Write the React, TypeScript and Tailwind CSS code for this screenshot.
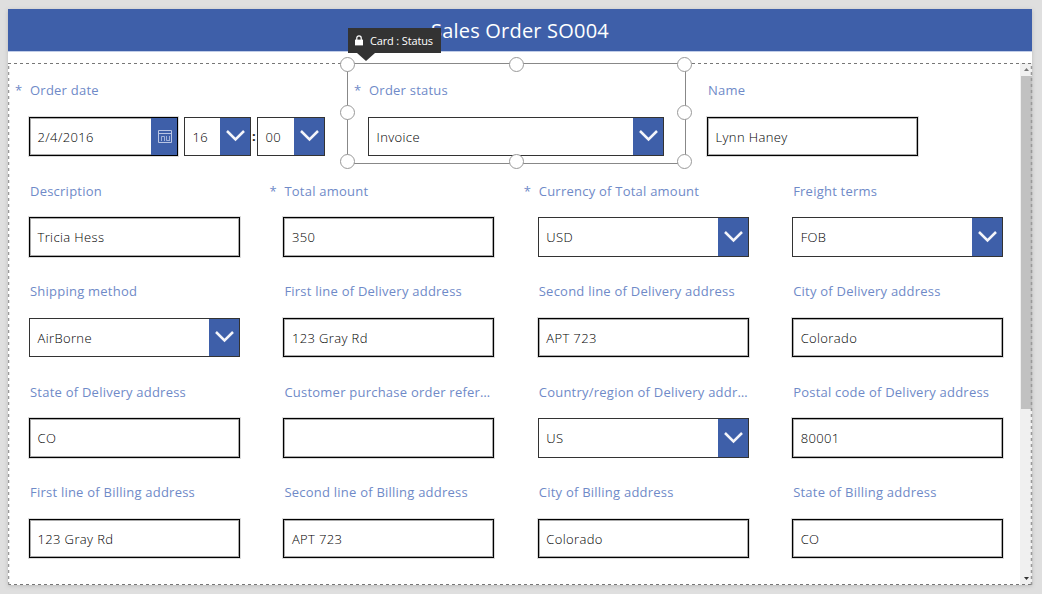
import type { ReactNode } from "react";

type Field = { label: string; value: string; required?: boolean; select?: boolean };

const rows: Field[][] = [
  [
    { label: "Description", value: "Tricia Hess" },
    { label: "Total amount", value: "350", required: true },
    { label: "Currency of Total amount", value: "USD", required: true, select: true },
    { label: "Freight terms", value: "FOB", select: true },
  ],
  [
    { label: "Shipping method", value: "AirBorne", select: true },
    { label: "First line of Delivery address", value: "123 Gray Rd" },
    { label: "Second line of Delivery address", value: "APT 723" },
    { label: "City of Delivery address", value: "Colorado" },
  ],
  [
    { label: "State of Delivery address", value: "CO" },
    { label: "Customer purchase order refer…", value: "" },
    { label: "Country/region of Delivery addr…", value: "US", select: true },
    { label: "Postal code of Delivery address", value: "80001" },
  ],
  [
    { label: "First line of Billing address", value: "123 Gray Rd" },
    { label: "Second line of Billing address", value: "APT 723" },
    { label: "City of Billing address", value: "Colorado" },
    { label: "State of Billing address", value: "CO" },
  ],
];

function Chevron() {
  return (
    <svg width="20" height="14" viewBox="0 0 20 14" fill="none" stroke="#f4f5fa" strokeWidth="2.5">
      <path d="M2 2 10.500 10.500l8.500-8.500" />
    </svg>
  );
}

function CalendarIcon() {
  return (
    <svg className="ml-px" width="14" height="13" viewBox="0 0 14 13" fill="none" stroke="#b9c5e4">
      <path d="M.5.5h13v12H.5zM.5 3.500h13" />
      <path d="M3.500 11V6.500h3V11M8.500 6v4.500h2.500M11.500 6v5" strokeOpacity=".8" />
    </svg>
  );
}

function Label({ children, required }: { children: ReactNode; required?: boolean }) {
  return (
    <div className="flex h-5 text-[13px] leading-5 tracking-[0.23px] text-[#6f8ac8]">
      <span className="w-[22px] shrink-0 pl-[7px]">{required ? "*" : ""}</span>
      <span className="w-[220px] whitespace-nowrap">{children}</span>
    </div>
  );
}

function Box({ value, select, className = "w-[211px]" }: { value: string; select?: boolean; className?: string }) {
  return (
    <div
      className={`flex h-[39.75px] shrink-0 justify-between border bg-white text-[13px] font-light tracking-[0.37px] text-black ${
        select ? "border-[#333]" : "border-black shadow-[0_0_0_1px_#dcdcdc,inset_0_0_0_1px_#aaa]"
      } ${className}`}
    >
      <span className="self-center pt-[2px] pl-[7.5px] whitespace-nowrap">{value}</span>
      {select && (
        <span className="flex w-[30px] items-center justify-center bg-[#3e5fa9]">
          <Chevron />
        </span>
      )}
    </div>
  );
}

function Card({ field, wide }: { field: Field; wide?: boolean }) {
  return (
    <div className="pt-[16.5px]">
      <Label required={field.required}>{field.label}</Label>
      <div className="pt-[16.5px] pl-[21px]">
        <Box value={field.value} select={field.select} className={wide ? "w-[296px]" : "w-[211px]"} />
      </div>
    </div>
  );
}

function Handle({ className }: { className: string }) {
  return <i className={`absolute size-[15px] rounded-full border-[1.5px] border-[#999] bg-white ${className}`} />;
}

export default function App() {
  return (
    <div className="h-[594px] w-[1042px] overflow-hidden bg-[#dfdfdf] pt-[9px] pl-2 font-['Open_Sans',sans-serif]">
      <main className="h-[576px] w-[1024px] bg-white shadow-[0_1px_4px_#bbb]">
        <header className="flex h-[42px] items-center justify-center bg-[#3e5fa9] pt-[2px] text-[20px] tracking-[0.2px] text-white shadow-[0_1px_0_#c1cde8]">
          <h1>Sales Order SO004</h1>
        </header>
        <section className="relative mt-3 flex h-[522px]">
          <div className="w-[1012px] overflow-hidden">
            <div className="grid h-[101px] w-[1017px] grid-cols-3 pt-[0.5px]">
              <div className="pt-[16.5px]">
                <Label required>Order date</Label>
                <div className="flex pt-[16.5px] pl-[21px]">
                  <div className="flex h-[39.75px] w-[149px] border border-black text-[13px] font-light tracking-[0.37px] text-black shadow-[0_0_0_1px_#dcdcdc,inset_0_0_0_1px_#aaa]">
                    <span className="flex-1 self-center pt-[2px] pl-[7.5px]">2/4/2016</span>
                    <span className="flex w-[26px] items-center justify-center bg-[#3e5fa9]">
                      <CalendarIcon />
                    </span>
                  </div>
                  <Box value="16" select className="ml-[6px] w-[67px]" />
                  <span className="w-[6px] self-center pl-[1px] text-[13px] font-bold text-[#222]">:</span>
                  <Box value="00" select className="w-[68px]" />
                </div>
              </div>
              <Card field={{ label: "Order status", value: "Invoice", required: true, select: true }} wide />
              <Card field={{ label: "Name", value: "Lynn Haney" }} />
            </div>
            {rows.map((row, i) => (
              <div key={i} className="grid h-[100.5px] w-[1017.500px] grid-cols-4">
                {row.map((field) => (
                  <Card key={field.label} field={field} />
                ))}
              </div>
            ))}
          </div>
          <div className="flex w-3 flex-col items-center bg-[#f0f0f0]">
            <div className="flex h-[13px] items-center">
              <svg width="5" height="3" fill="#777"><path d="M0 3 2.500 0 5 3z" /></svg>
            </div>
            <div className="h-[333px] w-[11px] bg-[#c1c1c1]" />
            <div className="mt-auto flex h-[13px] items-center">
              <svg width="5" height="3" fill="#333"><path d="M0 0 2.500 3 5 0z" /></svg>
            </div>
          </div>
          <svg className="pointer-events-none absolute inset-0" width="1025" height="522" fill="none">
            <path d="M0 .5h1024M0 521.500h1024" stroke="#777" strokeDasharray="3 3" />
            <path d="M.5 3v519M1023.500 3v519" stroke="#999" strokeWidth="1.500" strokeDasharray="3 3" />
          </svg>
          <div className="absolute top-0 left-[339px] h-[101px] w-[339px] border border-[#888]">
            <Handle className="-top-[7px] -left-[8px]" />
            <Handle className="-top-[7px] left-[161px]" />
            <Handle className="-top-[7px] -right-[7px]" />
            <Handle className="top-[41px] -left-[8px]" />
            <Handle className="top-[41px] -right-[7px]" />
            <Handle className="top-[90px] -left-[8px]" />
            <Handle className="top-[90px] left-[161px]" />
            <Handle className="top-[90px] -right-[7px]" />
          </div>
          <div className="absolute -top-[35px] left-[340px] flex h-[25px] w-[93px] items-center bg-[#333] pl-[7px] text-[11px] text-white">
            <svg width="8" height="11" viewBox="0 0 9 12" fill="none">
              <path d="M2 5.500V3.200a2.500 2.500 0 0 1 5 0v2.300" stroke="white" strokeWidth="1.400" />
              <path d="M0 5h9v6.500H0z" fill="white" />
            </svg>
            <span className="ml-[7px] pt-px font-medium whitespace-nowrap tracking-[-0.15px]">Card : Status</span>
            <svg className="absolute top-[25px] left-[9px]" width="18" height="8" fill="#333">
              <path d="M0 0h18L9 8z" />
            </svg>
          </div>
        </section>
      </main>
    </div>
  );
}
